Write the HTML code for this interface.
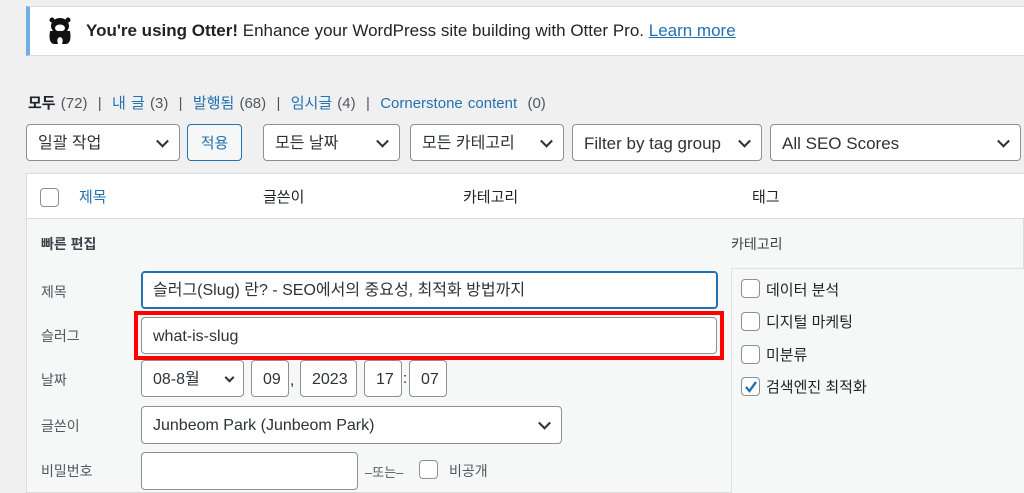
<!DOCTYPE html><html><head><meta charset="utf-8"><style>
*{box-sizing:border-box;margin:0;padding:0}
body{width:1024px;height:493px;overflow:hidden;background:#f0f0f1;font-family:"Liberation Sans","Noto Sans CJK KR",sans-serif;color:#1d2327;position:relative;font-size:15px}
.a{position:absolute}
.box{position:absolute;background:#fff;border:1px solid #8c8f94;border-radius:4px;font-size:16px;display:flex;align-items:center;padding-left:11px;color:#2c3338;line-height:1;padding-top:2px}
.chev{position:absolute;right:12px;top:50%;width:9px;height:9px;border-right:2px solid #2c3338;border-bottom:2px solid #2c3338;transform:translateY(-70%) rotate(45deg)}
.cb{position:absolute;width:19px;height:19px;border:1px solid #8c8f94;border-radius:4px;background:#fff}
.lbl{position:absolute;left:41px;font-size:14px;color:#50575e}
.blue{color:#2271b1}
</style></head><body>
<div class="a" style="left:26px;top:6px;width:998px;height:50px;background:#fff;border-left:4px solid #72aee6;border-top:1px solid #dcdcde;border-bottom:1px solid #dcdcde"></div>
<svg class="a" style="left:47px;top:17px" width="26" height="28" viewBox="0 0 26 28"><ellipse cx="13" cy="9" rx="9" ry="8" fill="#111"/><circle cx="5" cy="3" r="2.5" fill="#111"/><circle cx="21" cy="3" r="2.5" fill="#111"/><ellipse cx="13" cy="11" rx="5" ry="3.5" fill="#fff"/><path d="M3 14 Q1 26 7 27 L11 27 Q9 21 13 20 Q17 21 15 27 L19 27 Q25 26 23 14Z" fill="#111"/></svg>
<div class="a" style="left:86px;top:21px;font-size:17px;color:#1d2327"><b>You're using Otter!</b> Enhance your WordPress site building with Otter Pro. <span class="blue" style="text-decoration:underline">Learn more</span></div>
<div class="a" style="left:28px;top:92px;font-size:15px;color:#50575e;word-spacing:1px"><b style="color:#1d2327">모두</b> (72) &nbsp;|&nbsp; <span class="blue">내 글</span> (3) &nbsp;|&nbsp; <span class="blue">발행됨</span> (68) &nbsp;|&nbsp; <span class="blue">임시글</span> (4) &nbsp;|&nbsp; <span class="blue">Cornerstone content</span> &nbsp;(0)</div>
<div class="box" style="left:26px;top:124px;width:154px;height:37px">일괄 작업<i class="chev"></i></div>
<div class="box" style="left:187px;top:124px;width:55px;height:37px;border-color:#2271b1;color:#2271b1;background:#f6f7f7;justify-content:center;padding:2px 0 0;font-size:15px">적용</div>
<div class="box" style="left:263px;top:124px;width:137px;height:37px">모든 날짜<i class="chev"></i></div>
<div class="box" style="left:410px;top:124px;width:154px;height:37px">모든 카테고리<i class="chev"></i></div>
<div class="box" style="left:572px;top:124px;width:190px;height:37px;font-size:17px">Filter by tag group<i class="chev"></i></div>
<div class="box" style="left:770px;top:124px;width:251px;height:37px;font-size:17px">All SEO Scores<i class="chev"></i></div>
<div class="a" style="left:26px;top:173px;width:998px;height:320px;background:#f6f7f7;border:1px solid #dcdcde"></div>
<div class="a" style="left:27px;top:174px;width:997px;height:45px;background:#fff;border-bottom:1px solid #dcdcde"></div>
<div class="cb" style="left:40px;top:188px"></div>
<div class="a blue" style="left:79px;top:186px;font-size:15px">제목</div>
<div class="a" style="left:263px;top:186px;font-size:15px">글쓴이</div>
<div class="a" style="left:463px;top:186px;font-size:15px">카테고리</div>
<div class="a" style="left:752px;top:186px;font-size:15px">태그</div>
<div class="a" style="left:41px;top:234px;font-size:14px;font-weight:bold;color:#3c434a">빠른 편집</div>
<div class="a" style="left:731px;top:234px;font-size:14px;color:#3c434a">카테고리</div>
<div class="lbl" style="top:282px">제목</div>
<div class="lbl" style="top:326px">슬러그</div>
<div class="lbl" style="top:370px">날짜</div>
<div class="lbl" style="top:416px">글쓴이</div>
<div class="lbl" style="top:461px">비밀번호</div>
<div class="box" style="left:141px;top:271px;width:577px;height:38px;border-color:#2271b1;box-shadow:0 0 0 1px #2271b1 inset">슬러그(Slug) 란? - SEO에서의 중요성, 최적화 방법까지</div>
<div class="a" style="left:134px;top:311px;width:590px;height:49px;border:4px solid #f00"></div>
<div class="box" style="left:141px;top:317px;width:576px;height:37px">what-is-slug</div>
<div class="box" style="left:141px;top:360px;width:103px;height:37px">08-8월<i class="chev" style="right:10px;width:7px;height:7px"></i></div>
<div class="box" style="left:251px;top:360px;width:38px;height:37px">09</div>
<div class="a" style="left:290px;top:372px">,</div>
<div class="box" style="left:300px;top:360px;width:57px;height:37px">2023</div>
<div class="box" style="left:364px;top:360px;width:38px;height:37px">17</div>
<div class="a" style="left:403px;top:370px">:</div>
<div class="box" style="left:409px;top:360px;width:38px;height:37px">07</div>
<div class="box" style="left:141px;top:406px;width:421px;height:38px">Junbeom Park (Junbeom Park)<i class="chev"></i></div>
<div class="box" style="left:141px;top:452px;width:217px;height:38px"></div>
<div class="a" style="left:365px;top:462px;font-size:13px;color:#50575e">–또는–</div>
<div class="cb" style="left:419px;top:460px"></div>
<div class="a" style="left:449px;top:461px;font-size:14px;color:#50575e">비공개</div>
<div class="a" style="left:731px;top:268px;width:293px;height:225px;border:1px solid #e0e0e0;border-right:none;border-bottom:none;background:#f6f7f7"></div>
<div class="cb" style="left:741px;top:279px"></div><div class="a" style="left:766px;top:279px;font-size:15px">데이터 분석</div>
<div class="cb" style="left:741px;top:312px"></div><div class="a" style="left:766px;top:311px;font-size:15px">디지털 마케팅</div>
<div class="cb" style="left:741px;top:345px"></div><div class="a" style="left:766px;top:344px;font-size:15px">미분류</div>
<div class="cb" style="left:741px;top:377px"></div><svg class="a" style="left:743px;top:379px" width="16" height="16" viewBox="0 0 16 16"><path d="M3 8 L6.5 12 L13 3" fill="none" stroke="#2271b1" stroke-width="2.4"/></svg><div class="a" style="left:766px;top:376px;font-size:15px">검색엔진 최적화</div>
</body></html>
